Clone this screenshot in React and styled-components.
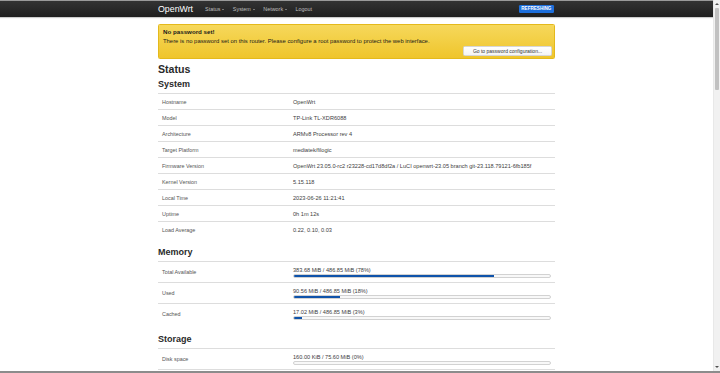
import React from "react";
import styled, { createGlobalStyle } from "styled-components";

const GlobalStyle = createGlobalStyle`
  html, body { margin: 0; padding: 0; overflow: hidden; background: #fff; }
  body { font-family: "Liberation Sans", Arial, Helvetica, sans-serif; color: #404040; }
  * { box-sizing: border-box; }
`;

const Frame = styled.div`
  width: 720px;
  height: 373px;
  display: flex;
  flex-direction: column;
  overflow: hidden;
`;

const Viewport = styled.div`
  flex: 1;
  display: flex;
  min-height: 0;
`;

const BottomEdge = styled.div`
  height: 2px;
  background: #8c8c8c;
`;

const Main = styled.div`
  flex: 1;
  min-width: 0;
  overflow: hidden;
  display: flex;
  flex-direction: column;
`;

const Scrollbar = styled.div`
  width: 7px;
  background: #f1f1f1;
  border-left: 1px solid #e8e8e8;
  display: flex;
  flex-direction: column;
  align-items: center;
`;

const Arrow = styled.div`
  width: 0;
  height: 0;
  margin: ${(p) => (p.$down ? "2px 0 3px" : "3px 0 2px")};
  border-left: 2px solid transparent;
  border-right: 2px solid transparent;
  ${(p) => (p.$down ? "border-top: 2px solid #505050;" : "border-bottom: 2px solid #505050;")}
`;

const Track = styled.div`
  flex: 1;
  width: 100%;
  padding: 1px 1px 0;
`;

const Thumb = styled.div`
  height: 82px;
  background: #c1c1c1;
  border-radius: 1px;
`;

const Header = styled.header`
  height: 17px;
  border-top: 1px solid #9a9a9a;
  background: linear-gradient(#333333, #1f1f1f);
  box-shadow: 0 1px 1px rgba(0, 0, 0, 0.2);
  flex-shrink: 0;
`;

const Container = styled.div`
  width: 397px;
  margin: 0 auto;
`;

const HeaderBar = styled(Container)`
  height: 100%;
  display: flex;
  align-items: center;
`;

const Brand = styled.span`
  font-size: 8.8px;
  color: #ffffff;
  margin-right: 12px;
`;

const Nav = styled.nav`
  display: flex;
  align-items: center;
  gap: 8.5px;
`;

const NavItem = styled.span`
  font-size: 5.4px;
  color: #bfbfbf;
  display: inline-flex;
  align-items: center;
`;

const Caret = styled.span`
  display: inline-block;
  width: 0;
  height: 0;
  margin-left: 2px;
  margin-top: 0.5px;
  border-left: 1.7px solid transparent;
  border-right: 1.7px solid transparent;
  border-top: 1.7px solid #bfbfbf;
`;

const Badge = styled.span`
  margin-left: auto;
  margin-right: 1px;
  background: #1d6fdc;
  color: #ffffff;
  font-size: 4.6px;
  font-weight: bold;
  text-transform: uppercase;
  line-height: 6px;
  padding: 1px 2.6px;
  border-radius: 1.3px;
`;

const Alert = styled.div`
  margin-top: 7px;
  border: 1px solid #e4b91c;
  border-radius: 1.5px;
  background: linear-gradient(#f6d85c, #efc52b);
  padding: 3px 2px 2px 4px;
  color: #1a1a1a;
`;

const AlertTitle = styled.div`
  font-size: 6.2px;
  font-weight: bold;
  line-height: 7px;
`;

const AlertText = styled.div`
  font-size: 5.9px;
  line-height: 6px;
  margin-top: 3px;
`;

const AlertActions = styled.div`
  display: flex;
  justify-content: flex-end;
  margin-top: 2px;
`;

const Button = styled.button`
  width: 89px;
  height: 10px;
  padding: 0;
  font-family: inherit;
  font-size: 5px;
  color: #333;
  background: linear-gradient(#ffffff, #f4f4f4);
  border: 0.5px solid #d6d6d6;
  border-radius: 1.3px;
`;

const PageTitle = styled.h2`
  margin: 3px 0 0;
  font-size: 10.6px;
  line-height: 14px;
  font-weight: bold;
  color: #2a2a2a;
`;

const Section = styled.section`
  margin-top: ${(p) => (p.$first ? "3px" : "10px")};
`;

const SectionTitle = styled.h3`
  margin: 0 0 4px;
  font-size: 9px;
  line-height: 10px;
  font-weight: bold;
  color: #2a2a2a;
`;

const Row = styled.div`
  display: grid;
  grid-template-columns: 33% 1fr;
  border-top: 1px solid #dddddd;
  height: ${(p) => (p.$tall ? "21px" : "16px")};
  &:last-child {
    border-bottom: ${(p) => (p.$closed ? "1px solid #dddddd" : "0")};
    height: ${(p) => (p.$closed ? "22px" : p.$tall ? "21px" : "16px")};
  }
`;

const Label = styled.div`
  padding-left: 4px;
  font-size: 5.4px;
  color: #555555;
  display: flex;
  align-items: center;
  white-space: nowrap;
`;

const Value = styled.div`
  padding-left: 4px;
  font-size: 5.6px;
  color: #404040;
  display: flex;
  align-items: center;
  white-space: nowrap;
`;

const GaugeCell = styled.div`
  padding: 4.5px 4px 0;
`;

const GaugeText = styled.div`
  font-size: 5.6px;
  line-height: 6px;
  color: #404040;
  white-space: nowrap;
`;

const GaugeBar = styled.div`
  margin-top: 1.5px;
  height: 4px;
  border: 1px solid #d2d2d2;
  border-radius: 2px;
  background: #f8f8f8;
  overflow: hidden;
`;

const GaugeFill = styled.div`
  height: 100%;
  background: #0f53aa;
`;

const systemRows = [
  ["Hostname", "OpenWrt"],
  ["Model", "TP-Link TL-XDR6088"],
  ["Architecture", "ARMv8 Processor rev 4"],
  ["Target Platform", "mediatek/filogic"],
  [
    "Firmware Version",
    "OpenWrt 23.05.0-rc2 r23228-cd17d8df2a / LuCI openwrt-23.05 branch git-23.118.79121-6fb185f",
  ],
  ["Kernel Version", "5.15.118"],
  ["Local Time", "2023-06-26 11:21:41"],
  ["Uptime", "0h 1m 12s"],
  ["Load Average", "0.22, 0.10, 0.03"],
];

const memoryRows = [
  ["Total Available", "383.68 MiB / 486.85 MiB (78%)", 78],
  ["Used", "90.56 MiB / 486.85 MiB (18%)", 18],
  ["Cached", "17.02 MiB / 486.85 MiB (3%)", 3],
];

const storageRows = [["Disk space", "160.00 KiB / 75.60 MiB (0%)", 0]];

function GaugeRow({ label, text, pct, closed }) {
  return (
    <Row $tall $closed={closed}>
      <Label>{label}</Label>
      <GaugeCell>
        <GaugeText>{text}</GaugeText>
        <GaugeBar>
          <GaugeFill style={{ width: `${pct}%` }} />
        </GaugeBar>
      </GaugeCell>
    </Row>
  );
}

export default function App() {
  return (
    <>
      <GlobalStyle />
      <Frame>
        <Viewport>
          <Main>
            <Header>
              <HeaderBar>
                <Brand>OpenWrt</Brand>
                <Nav>
                  <NavItem>
                    Status<Caret />
                  </NavItem>
                  <NavItem>
                    System<Caret />
                  </NavItem>
                  <NavItem>
                    Network<Caret />
                  </NavItem>
                  <NavItem>Logout</NavItem>
                </Nav>
                <Badge>Refreshing</Badge>
              </HeaderBar>
            </Header>
            <Container>
              <Alert>
                <AlertTitle>No password set!</AlertTitle>
                <AlertText>
                  There is no password set on this router. Please configure a root password to
                  protect the web interface.
                </AlertText>
                <AlertActions>
                  <Button>Go to password configuration...</Button>
                </AlertActions>
              </Alert>
              <PageTitle>Status</PageTitle>
              <Section $first>
                <SectionTitle>System</SectionTitle>
                {systemRows.map(([k, v]) => (
                  <Row key={k}>
                    <Label>{k}</Label>
                    <Value>{v}</Value>
                  </Row>
                ))}
              </Section>
              <Section>
                <SectionTitle>Memory</SectionTitle>
                {memoryRows.map(([k, t, p]) => (
                  <GaugeRow key={k} label={k} text={t} pct={p} />
                ))}
              </Section>
              <Section>
                <SectionTitle>Storage</SectionTitle>
                {storageRows.map(([k, t, p]) => (
                  <GaugeRow key={k} label={k} text={t} pct={p} closed />
                ))}
              </Section>
            </Container>
          </Main>
          <Scrollbar>
            <Arrow />
            <Track>
              <Thumb />
            </Track>
            <Arrow $down />
          </Scrollbar>
        </Viewport>
        <BottomEdge />
      </Frame>
    </>
  );
}
